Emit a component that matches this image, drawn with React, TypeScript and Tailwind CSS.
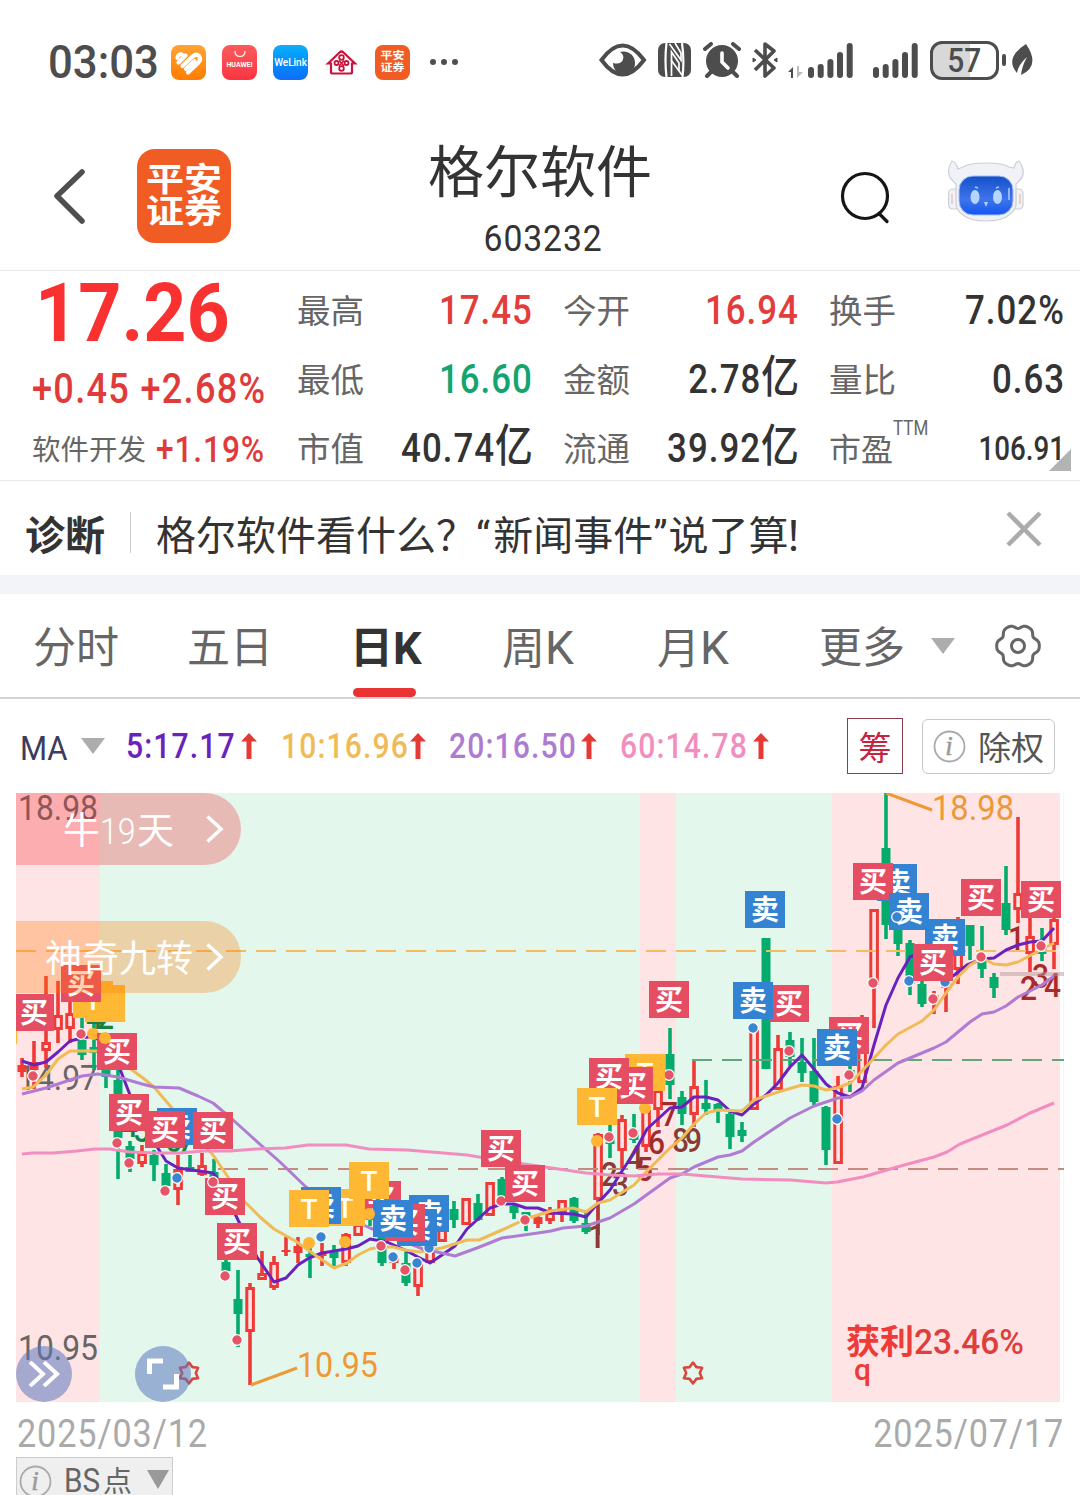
import type { ReactNode } from 'react';

const RED = '#ee3b37';
const GREEN = '#05ab6c';

// [x, wick top, wick bottom, body top, body bottom, kind]
// u = hollow red, r = solid red, d = green
type Candle = [number, number, number, number, number, 'u' | 'r' | 'd'];

const candles: Candle[] = [
  [22, 1058, 1077, 1065, 1072, 'r'],
  [34, 1041, 1089, 1062, 1070, 'r'],
  [46, 976, 1068, 1042, 1051, 'u'],
  [58, 981, 1043, 1015, 1030, 'u'],
  [70, 995, 1043, 1013, 1029, 'u'],
  [82, 1017, 1060, 1040, 1055, 'd'],
  [94, 1022, 1070, 1047, 1053, 'd'],
  [106, 1060, 1088, 1068, 1077, 'd'],
  [118, 1070, 1179, 1080, 1138, 'd'],
  [130, 1141, 1172, 1146, 1159, 'd'],
  [142, 1145, 1167, 1153, 1164, 'u'],
  [154, 1150, 1181, 1155, 1165, 'd'],
  [166, 1164, 1192, 1173, 1186, 'd'],
  [178, 1155, 1205, 1169, 1190, 'u'],
  [190, 1155, 1172, 1167, 1172, 'd'],
  [202, 1153, 1176, 1165, 1175, 'u'],
  [214, 1159, 1185, 1172, 1182, 'd'],
  [226, 1246, 1278, 1262, 1271, 'd'],
  [238, 1270, 1347, 1299, 1314, 'd'],
  [250, 1283, 1385, 1287, 1332, 'u'],
  [262, 1251, 1280, 1273, 1280, 'u'],
  [274, 1256, 1290, 1262, 1288, 'u'],
  [286, 1237, 1256, 1250, 1252, 'r'],
  [298, 1237, 1263, 1246, 1253, 'r'],
  [310, 1243, 1278, 1254, 1257, 'd'],
  [322, 1243, 1266, 1253, 1256, 'r'],
  [334, 1245, 1266, 1252, 1258, 'd'],
  [346, 1233, 1266, 1234, 1263, 'u'],
  [358, 1223, 1236, 1224, 1236, 'u'],
  [370, 1215, 1226, 1215, 1220, 'd'],
  [382, 1237, 1266, 1237, 1263, 'd'],
  [394, 1253, 1269, 1258, 1263, 'r'],
  [406, 1252, 1286, 1263, 1283, 'd'],
  [418, 1260, 1296, 1264, 1287, 'u'],
  [430, 1246, 1263, 1246, 1263, 'u'],
  [442, 1226, 1242, 1226, 1242, 'u'],
  [454, 1201, 1228, 1209, 1220, 'd'],
  [466, 1198, 1225, 1198, 1225, 'u'],
  [478, 1194, 1221, 1203, 1220, 'd'],
  [490, 1182, 1216, 1182, 1216, 'u'],
  [502, 1177, 1200, 1179, 1200, 'd'],
  [514, 1203, 1219, 1206, 1213, 'd'],
  [526, 1212, 1231, 1212, 1219, 'd'],
  [538, 1215, 1228, 1217, 1224, 'r'],
  [550, 1207, 1224, 1212, 1221, 'u'],
  [562, 1200, 1222, 1200, 1213, 'u'],
  [574, 1197, 1223, 1198, 1221, 'd'],
  [586, 1212, 1234, 1223, 1232, 'd'],
  [598, 1133, 1235, 1134, 1200, 'u'],
  [610, 1125, 1158, 1138, 1144, 'd'],
  [622, 1115, 1168, 1119, 1151, 'u'],
  [634, 1114, 1143, 1130, 1140, 'd'],
  [646, 1110, 1152, 1110, 1147, 'u'],
  [658, 1090, 1127, 1090, 1110, 'u'],
  [670, 1028, 1099, 1054, 1085, 'd'],
  [682, 1091, 1125, 1097, 1114, 'd'],
  [694, 1061, 1127, 1086, 1115, 'u'],
  [706, 1080, 1115, 1103, 1109, 'd'],
  [718, 1103, 1123, 1104, 1110, 'd'],
  [730, 1112, 1149, 1114, 1137, 'd'],
  [742, 1122, 1142, 1130, 1136, 'd'],
  [754, 1030, 1110, 1030, 1110, 'u'],
  [766, 938, 1069, 938, 1069, 'd'],
  [778, 1035, 1090, 1048, 1090, 'u'],
  [790, 1032, 1066, 1040, 1057, 'd'],
  [802, 1038, 1082, 1062, 1073, 'd'],
  [814, 1038, 1105, 1071, 1102, 'd'],
  [826, 1106, 1165, 1107, 1150, 'd'],
  [838, 1076, 1163, 1086, 1164, 'u'],
  [850, 1065, 1092, 1070, 1080, 'd'],
  [862, 1015, 1083, 1030, 1083, 'u'],
  [874, 909, 1028, 909, 985, 'u'],
  [886, 793, 939, 848, 925, 'd'],
  [898, 918, 956, 920, 944, 'd'],
  [910, 940, 995, 943, 984, 'd'],
  [922, 980, 1007, 984, 1004, 'd'],
  [934, 991, 1014, 995, 1003, 'r'],
  [946, 978, 1012, 978, 988, 'u'],
  [958, 917, 984, 925, 970, 'u'],
  [970, 925, 960, 925, 946, 'd'],
  [982, 926, 978, 961, 969, 'd'],
  [994, 973, 998, 977, 988, 'd'],
  [1006, 866, 935, 903, 930, 'd'],
  [1018, 817, 923, 893, 910, 'u'],
  [1030, 917, 972, 936, 954, 'u'],
  [1042, 928, 961, 945, 954, 'd'],
  [1054, 917, 969, 919, 945, 'u'],
];

const ma5 =
  '22,1061 34,1065 46,1062 58,1052 70,1041 82,1038 94,1036 106,1047 120,1069 130,1095 142,1120 154,1142 166,1161 178,1168 213,1173 220,1182 238,1220 257,1257 274,1282 286,1278 298,1265 309,1258 322,1253 346,1249 358,1246 370,1239 387,1242 405,1250 418,1257 430,1263 442,1255 455,1246 467,1229 478,1219 490,1208 502,1204 514,1204 526,1208 538,1208 551,1213 574,1214 586,1217 598,1203 610,1190 622,1171 634,1153 647,1129 670,1108 682,1107 694,1097 706,1097 718,1100 730,1111 742,1115 754,1104 766,1095 778,1083 790,1067 802,1055 814,1069 826,1084 838,1093 850,1097 862,1088 874,1045 886,1005 898,978 910,957 922,952 940,975 953,976 967,965 982,959 994,958 1006,950 1018,945 1030,942 1042,941 1054,928';
const ma10 =
  '22,1089 33,1087 46,1075 58,1059 70,1051 97,1051 114,1059 132,1070 143,1078 154,1087 171,1107 192,1131 213,1155 245,1202 260,1217 274,1229 297,1242 315,1255 334,1268 347,1263 358,1255 370,1249 381,1247 393,1247 405,1250 420,1252 442,1248 467,1240 479,1240 502,1230 526,1219 538,1215 551,1211 573,1208 586,1212 598,1203 610,1200 634,1185 650,1168 670,1148 682,1138 694,1124 706,1113 718,1110 742,1111 754,1100 778,1092 802,1085 814,1086 826,1090 837,1088 850,1083 862,1071 874,1058 886,1045 898,1034 922,1021 934,1010 946,993 958,977 970,965 982,958 994,964 1006,965 1018,962 1033,954 1054,943';
const ma20 =
  '22,1094 46,1088 58,1084 82,1076 98,1074 118,1077 142,1084 154,1087 179,1088 198,1096 213,1103 232,1119 253,1138 280,1162 306,1187 340,1214 370,1228 423,1249 442,1253 455,1256 477,1248 502,1238 538,1233 551,1231 563,1228 586,1226 610,1218 634,1204 670,1178 682,1174 694,1167 718,1157 730,1155 742,1151 754,1142 790,1118 814,1106 838,1098 850,1097 862,1091 874,1080 898,1063 910,1058 934,1048 946,1042 970,1022 982,1014 994,1012 1006,1006 1018,997 1042,985 1054,976';
const ma60 =
  '22,1154 33,1153 53,1153 77,1151 95,1149 110,1149 130,1152 157,1153 180,1153 203,1151 230,1151 257,1149 285,1148 308,1145 346,1145 369,1149 407,1150 467,1155 503,1161 538,1166 586,1173 610,1175 634,1176 658,1174 682,1174 742,1179 790,1180 826,1183 837,1182 863,1177 897,1167 934,1157 947,1152 960,1144 1007,1125 1030,1113 1054,1103';

const dotColors = { b: '#e65468', s: '#3a85d0', t: '#ffb533' };
const badgeColors = { b: '#e54e62', s: '#3383d2', t: '#ffb833' };
type Kind = 'b' | 's' | 't';

const dots: [number, number, Kind][] = [
  [33, 1076, 'b'], [81, 1034, 'b'], [93, 1034, 't'],
  [117, 1143, 'b'], [129, 1163, 'b'], [165, 1191, 'b'], [177, 1178, 's'],
  [225, 1276, 'b'], [237, 1340, 'b'], [309, 1243, 't'], [321, 1237, 's'],
  [345, 1242, 't'], [381, 1246, 'b'], [393, 1257, 's'], [405, 1270, 'b'],
  [417, 1263, 's'], [429, 1248, 's'], [501, 1201, 'b'], [525, 1220, 'b'],
  [597, 1141, 't'], [609, 1137, 'b'], [633, 1133, 'b'], [645, 1108, 't'],
  [669, 1075, 'b'], [753, 1028, 's'], [789, 1051, 'b'], [837, 1119, 's'],
  [849, 1075, 'b'], [873, 983, 'b'], [909, 981, 's'], [933, 999, 'b'],
  [945, 982, 's'], [981, 957, 'b'], [1041, 946, 'b'],
];

// dots that sit above the badges
const topDots: [number, number, Kind][] = [
  [105, 1038, 't'], [213, 1182, 'b'], [369, 1214, 't'], [897, 917, 's'],
];

const badges: [number, number, Kind][] = [
  [14, 994, 'b'], [85, 985, 't'], [73, 981, 't'], [61, 965, 'b'],
  [97, 1033, 'b'], [109, 1094, 'b'], [157, 1108, 's'], [145, 1111, 'b'],
  [193, 1112, 'b'], [205, 1178, 'b'], [217, 1223, 'b'],
  [361, 1181, 'b'], [325, 1189, 't'], [349, 1162, 't'], [301, 1187, 's'], [289, 1190, 't'],
  [409, 1195, 's'], [397, 1209, 's'], [385, 1204, 'b'], [373, 1200, 's'],
  [481, 1130, 'b'], [505, 1165, 'b'],
  [649, 981, 'b'], [625, 1054, 't'], [613, 1067, 'b'], [589, 1058, 'b'], [577, 1088, 't'],
  [745, 891, 's'], [769, 985, 'b'], [733, 982, 's'],
  [829, 1017, 'b'], [817, 1029, 's'],
  [877, 864, 's'], [853, 863, 'b'], [889, 893, 's'],
  [925, 919, 's'], [913, 944, 'b'], [961, 879, 'b'], [1021, 881, 'b'],
];

// nine-turn counters: [digit, x, baseline, colour]
const counts: [string, number, number, string][] = [
  ['4', 86, 1029, '#1a8040'], ['2', 97, 1029, '#1a8040'],
  ['4', 121, 1137, '#1a8040'], ['5', 133, 1142, '#1a8040'],
  ['6', 165, 1152, '#1a8040'], ['7', 178, 1152, '#1a8040'],
  ['1', 588, 1248, '#8b3a35'], ['2', 601, 1186, '#8b3a35'], ['3', 612, 1196, '#8b3a35'],
  ['4', 626, 1169, '#8b3a35'], ['5', 636, 1181, '#a02c2c'], ['6', 648, 1154, '#a02c2c'],
  ['7', 661, 1126, '#a02c2c'], ['8', 672, 1152, '#8b3a35'], ['9', 685, 1152, '#8b3a35'],
  ['1', 1008, 950, '#a82a2a'], ['2', 1020, 1000, '#a82a2a'],
  ['3', 1032, 988, '#a82a2a'], ['4', 1044, 997, '#a82a2a'],
];

function Badge({ x, y, kind }: { x: number; y: number; kind: Kind }) {
  return (
    <g>
      <rect x={x} y={y} width="40" height="37" fill={badgeColors[kind]} />
      <text
        x={x + 20}
        y={y + 28.5}
        fill="#fff"
        fontSize="28"
        fontWeight={kind === 't' ? 500 : 700}
        textAnchor="middle"
      >
        {kind === 'b' ? '买' : kind === 's' ? '卖' : 'T'}
      </text>
    </g>
  );
}

function Dot({ x, y, kind }: { x: number; y: number; kind: Kind }) {
  return (
    <circle
      cx={x}
      cy={y}
      r={kind === 't' ? 6 : 5.3}
      fill={dotColors[kind]}
      stroke="#fff"
      strokeWidth={kind === 't' ? 0 : 1.2}
    />
  );
}

function Star({ x, y }: { x: number; y: number }) {
  const pts = Array.from({ length: 12 }, (_, i) => {
    const a = (i * Math.PI) / 6 - Math.PI / 2;
    const r = i % 2 ? 6.8 : 10.5;
    return `${x + r * Math.cos(a)},${y + r * Math.sin(a)}`;
  });
  return <polygon points={pts.join(' ')} fill="none" stroke="#d8473f" strokeWidth="2.6" strokeLinejoin="round" />;
}

function AxisText({ x, y, w, fill, children }: { x: number; y: number; w: number; fill: string; children: string }) {
  return (
    <text x={x} y={y} fill={fill} fontSize="35" textLength={w} lengthAdjust="spacingAndGlyphs">
      {children}
    </text>
  );
}

function KLineChart() {
  return (
    <svg
      className="block font-[Roboto,'Noto_Sans_CJK_SC',sans-serif]"
      width="1080"
      height="609"
      viewBox="0 793 1080 609"
    >
      <clipPath id="plot">
        <rect x="16" y="793" width="1048" height="609" />
      </clipPath>
      <rect x="16" y="793" width="1044" height="609" fill="#e3f7ec" />
      <rect x="16" y="793" width="84" height="609" fill="#ffe4e5" />
      <rect x="640" y="793" width="36" height="609" fill="#ffe4e5" />
      <rect x="832" y="793" width="228" height="609" fill="#ffe4e5" />
      <path d="M1063.5 793V1402" stroke="#f6f6f8" />

      <AxisText x={18} y={820} w={80} fill="#666">18.98</AxisText>
      <AxisText x={18} y={1090} w={80} fill="#666">14.97</AxisText>
      <AxisText x={18} y={1360} w={80} fill="#666">10.95</AxisText>

      <g clipPath="url(#plot)">
        {candles.map(([x, t, b, bt, bb, k]) => (
          <g key={x}>
            <rect x={x - 1.8} y={t} width="3.6" height={b - t} fill={k === 'd' ? GREEN : RED} />
            {k === 'u' ? (
              <rect x={x - 3.2} y={bt + 1.5} width="6.6" height={Math.max(bb - bt - 3, 2)} fill="#ffe4e5" stroke={RED} strokeWidth="3" />
            ) : (
              <rect x={x - 4.5} y={bt} width="9" height={bb - bt} fill={k === 'd' ? GREEN : RED} />
            )}
          </g>
        ))}
        <path d="M598 1204V1248" stroke="#8b3a35" strokeWidth="3.4" opacity=".6" />
        {counts.map(([d, x, y, c]) => (
          <text key={`${x}-${y}`} x={x} y={y} fill={c} fontSize="34" fontWeight="500" textLength="17" lengthAdjust="spacingAndGlyphs">
            {d}
          </text>
        ))}
        <path d="M16 951H1064" stroke="#f6ba62" strokeWidth="2" strokeDasharray="20 10" />
        <path d="M692 1060H1064" stroke="#62a579" strokeWidth="2" strokeDasharray="20 10" />
        <path d="M218 1169H1064" stroke="#c58a80" strokeWidth="2" strokeDasharray="20 10" />
        <path d="M1000 974H1064" stroke="#b99a9c" strokeWidth="4" opacity=".5" />
        <g fill="none" strokeWidth="3" strokeLinejoin="round">
          <polyline points={ma5} stroke="#6b21bd" />
          <polyline points={ma10} stroke="#f0bb57" />
          <polyline points={ma20} stroke="#b07bd2" />
          <polyline points={ma60} stroke="#f28ebf" />
        </g>
        {dots.map(([x, y, k]) => (
          <Dot key={x} x={x} y={y} kind={k} />
        ))}
        <rect x="16" y="1007" width="1.2" height="37" fill="#ffb833" />
        {badges.map(([x, y, k]) => (
          <Badge key={`${x}-${y}`} x={x} y={y} kind={k} />
        ))}
        {topDots.map(([x, y, k]) => (
          <Dot key={x} x={x} y={y} kind={k} />
        ))}
      </g>

      <path d="M886 793L932 810M251 1385L297 1368" stroke="#ee9836" strokeWidth="3" fill="none" />
      <AxisText x={932} y={820} w={82} fill="#ee9836">18.98</AxisText>
      <AxisText x={297} y={1377} w={81} fill="#ee9836">10.95</AxisText>

      <text x="846" y="1354" fill={RED} fontSize="34" fontWeight="700">获利</text>
      <text x="914" y="1354" fill="#dc3f3c" fontSize="35" fontWeight="500" textLength="110" lengthAdjust="spacingAndGlyphs">
        23.46%
      </text>
      <text x="854" y="1380" fill={RED} fontSize="30" fontWeight="500">q</text>
      <Star x={189} y={1373} />
      <Star x={693} y={1373} />
    </svg>
  );
}

function PillArrow() {
  return (
    <svg width="18" height="28" viewBox="0 0 18 28" fill="none" stroke="#fff" strokeWidth="3.6">
      <path d="M1.5 1.5L15 14L1.5 26.5" />
    </svg>
  );
}

function Caret({ className = '' }: { className?: string }) {
  return (
    <svg className={className} width="24" height="16" viewBox="0 0 24 16">
      <path d="M0 0H24L12 16Z" fill="#adadad" />
    </svg>
  );
}

function Info() {
  return (
    <svg width="33" height="33" viewBox="0 0 33 33" className="shrink-0">
      <circle cx="16.5" cy="16.5" r="15" fill="none" stroke="#aaa" strokeWidth="1.8" />
      <text x="16" y="25" fontSize="27" fontStyle="italic" fill="#999" stroke="#999" strokeWidth=".5" textAnchor="middle" fontFamily="Liberation Serif, serif">
        i
      </text>
    </svg>
  );
}

function PingAn({ className }: { className: string }) {
  return (
    <div className={`flex items-center justify-center bg-[#f05c23] font-bold text-white ${className}`}>
      <div className="flex scale-y-[0.86] flex-col">
        <span>平安</span>
        <span>证券</span>
      </div>
    </div>
  );
}

function Signal() {
  return (
    <svg width="45" height="35" viewBox="0 0 45 35" stroke="#4d4d4d" strokeWidth="6" strokeLinecap="round">
      <path d="M3 27V32M12.7 24V32M22.4 19V32M32 12V32M41.7 3V32" />
    </svg>
  );
}

function StatusBar() {
  return (
    <div className="flex h-[110px] items-start pt-[42px] pl-[48px] text-[#4d4d4d]">
      <div className="h-10 w-[123px] origin-left scale-x-[0.93] text-[47px] leading-10 font-medium">03:03</div>
      <div className="flex h-10 items-center gap-4">
        <svg width="35" height="35" viewBox="0 0 35 35">
          <defs>
            <linearGradient id="heart" x2="0" y2="1">
              <stop stopColor="#ffa335" />
              <stop offset="1" stopColor="#ff7d00" />
            </linearGradient>
          </defs>
          <rect width="35" height="35" rx="8" fill="url(#heart)" />
          <g fill="none" stroke="#fff" strokeWidth="4.2" strokeLinecap="round">
            <path d="M6.5 13Q6.500 9 11 9.500" />
            <path d="M7.500 17.500L14.500 10.500" />
            <path d="M11.500 21L21 12Q25 8 28 11Q30.500 14.500 27 18L17 27.500" />
            <path d="M15 24L23.500 16" />
          </g>
        </svg>
        <div className="flex size-[35px] flex-col items-center rounded-lg bg-gradient-to-b from-[#fb5a5c] to-[#fa3341] pt-[6px] text-white">
          <svg width="12" height="7" viewBox="0 0 12 7" fill="none" stroke="#fff" strokeWidth="1.2">
            <path d="M1 0Q1 5.5 6 5.5T11 0" />
          </svg>
          <span className="mt-[2px] text-[7px] leading-[10px] font-bold">HUAWEI</span>
        </div>
        <div className="flex size-[35px] items-center justify-center rounded-lg bg-gradient-to-b from-[#10aef9] to-[#116cfb] text-[10px] font-medium text-white">
          WeLink
        </div>
        <svg width="35" height="35" viewBox="0 0 35 35" fill="none" stroke="#c8143c" strokeWidth="2.2">
          <path d="M4 18.500L15.500 7.500Q17.500 5.500 19.500 7.500L31 18.500H28V27Q28 28.500 26.500 28.500H8.500Q7 28.500 7 27V18.500Z" />
          <circle cx="17.500" cy="12.500" r="2.300" strokeWidth="1.800" />
          <circle cx="12.500" cy="18" r="2" strokeWidth="1.800" />
          <circle cx="22.500" cy="18" r="2" strokeWidth="1.800" />
          <circle cx="17.500" cy="23.500" r="2.300" strokeWidth="1.800" />
          <path d="M15 15.500L20 21M20 15.500L15 21" strokeWidth="1.600" />
        </svg>
        <PingAn className="size-[35px] rounded-lg text-[12px] leading-[14px]" />
        <div className="flex gap-[5px] pl-1">
          <i className="size-[6px] rounded-full bg-[#4d4d4d]" />
          <i className="size-[6px] rounded-full bg-[#4d4d4d]" />
          <i className="size-[6px] rounded-full bg-[#4d4d4d]" />
        </div>
      </div>
      <div className="-mt-[2px] mr-[47px] ml-auto flex h-10 items-center">
        <svg width="48" height="34" viewBox="0 0 48 34">
          <path d="M2.500 17Q23.500-12 45 17Q23.500 46 2.500 17Z" fill="none" stroke="#4d4d4d" strokeWidth="4" />
          <path d="M24 8.500A11 11.500 0 1 1 14 20Q22 22 24 16.500Q25.500 12 21 9Z" fill="#4d4d4d" />
        </svg>
        <svg className="ml-[11px]" width="33" height="34" viewBox="0 0 33 34">
          <rect width="33" height="34" rx="7" fill="#4d4d4d" />
          <path d="M8.500 0Q6.500 17 8.500 34M24 0Q26.500 17 24.500 34" fill="none" stroke="#fff" strokeWidth="2.200" />
          <path d="M13.500 33V9L21 20V28M11.500 1L23 17V10L17 0" fill="none" stroke="#fff" strokeWidth="1.700" />
          <path d="M13 17L24 32" stroke="#fff" strokeWidth="1.700" />
        </svg>
        <svg className="ml-[12px]" width="38" height="36" viewBox="0 0 38 36">
          <circle cx="19" cy="19" r="16" fill="#4d4d4d" />
          <path d="M2 7L8 2M36 7L30 2M8 30L4 34M30 30L34 34" stroke="#4d4d4d" strokeWidth="4" strokeLinecap="round" />
          <path d="M19 11V20L25 26" fill="none" stroke="#fff" strokeWidth="3.600" strokeLinecap="round" />
        </svg>
        <svg className="ml-[11px]" width="26" height="36" viewBox="0 0 26 36" fill="none" stroke="#4d4d4d" strokeWidth="3.600" strokeLinejoin="round">
          <path d="M3 8L22 26L13 34V2L22 9L3 28" />
          <path d="M1 16V20L4 18ZM25 16V20L22 18Z" fill="#4d4d4d" strokeWidth="1" />
        </svg>
        <svg className="mt-6 ml-[10px]" width="16" height="12" viewBox="0 0 16 12">
          <path d="M5 12V1L0 6H3V12Z" fill="#4d4d4d" />
          <path d="M9 0H11V6H15L9 12Z" fill="#bbb" />
        </svg>
        <div className="ml-[4px]"><Signal /></div>
        <div className="ml-[20px]"><Signal /></div>
        <div className="ml-[12px] flex h-[39px] w-[69px] items-center justify-center rounded-[12px] border-3 border-[#4d4d4d] bg-gradient-to-r from-[#d8d8d8] from-58% to-white to-58% text-[34px] leading-none font-medium">
          <span className="scale-x-[0.88]">57</span>
        </div>
        <i className="ml-[3px] h-3 w-1 rounded-sm bg-[#4d4d4d]" />
        <svg className="ml-[6px]" width="21" height="32" viewBox="0 0 21 32">
          <path d="M14 0Q29 22 9 31Q10 22 15 13Q6 21 5 29Q-8 14 14 0Z" fill="#4d4d4d" />
        </svg>
      </div>
    </div>
  );
}

function Robot() {
  return (
    <svg width="76" height="62" viewBox="0 0 76 62">
      <defs>
        <linearGradient id="visor" x2="0" y2="1">
          <stop stopColor="#1450c8" />
          <stop offset=".6" stopColor="#3f74ec" />
          <stop offset="1" stopColor="#1257f0" />
        </linearGradient>
      </defs>
      <g fill="#f1f2f7" stroke="#cdcfd6" strokeWidth="1.200">
        <rect x=".6" y="29" width="12" height="20" rx="4" />
        <rect x="63" y="29" width="12" height="20" rx="4" />
        <path d="M4 1Q-3 12 4 20L8 24V44Q8 50 15 55Q22 61 38 61T61 55Q68 50 68 44V24L72 20Q79 12 71 1Q68 1 66 8L61 7Q55 3 38 3T15 7L10 9Q8 2 4 1Z" />
      </g>
      <path d="M4 34V44M72 34V44" stroke="#ebd2c9" strokeWidth="2" />
      <rect x="11" y="16" width="54" height="39" rx="14" fill="url(#visor)" stroke="#a7c1f6" />
      <ellipse cx="27" cy="37" rx="4.500" ry="7" fill="#b5d5fc" />
      <ellipse cx="49.500" cy="37" rx="4.500" ry="7" fill="#b5d5fc" />
      <path d="M27 27L30 28M48 28L51 27M61 28V40" stroke="#a9c8fa" strokeWidth="1.600" />
      <path d="M36 42H40L38 47Z" fill="#b5d5fc" />
    </svg>
  );
}

function Header() {
  return (
    <div className="flex h-[161px] border-b border-[#e9e9e9] text-[#333]">
      <svg className="mt-[58px] ml-[53px]" width="33" height="58" viewBox="0 0 33 58" fill="none" stroke="#4f4f4f" strokeWidth="5.500" strokeLinecap="round" strokeLinejoin="round">
        <path d="M29 4L4 28L29 53" />
      </svg>
      <PingAn className="mt-[39px] ml-[51px] size-[94px] rounded-[18px] text-[38px] leading-[37px]" />
      <div className="ml-[152px] flex w-[314px] flex-col items-center pt-[27px] text-center">
        <h1 className="text-[56px] leading-[72px]">格尔软件</h1>
        <div className="mt-[10px] scale-x-[0.91] pl-[6px] text-[37px] leading-10 tracking-[1px]">603232</div>
      </div>
      <svg className="mt-[61px] ml-[143px]" width="50" height="53" viewBox="0 0 50 53" fill="none" stroke="#151515" strokeWidth="3.200" strokeLinecap="round">
        <circle cx="25" cy="25" r="22.500" />
        <path d="M39 42.500L47 50.500" />
      </svg>
      <div className="mt-[50px] ml-[58px]"><Robot /></div>
    </div>
  );
}

function Quote({ label, value, color = 'text-[#333]' }: { label: ReactNode; value: ReactNode; color?: string }) {
  return (
    <div className="flex h-[69px] items-center justify-between">
      <span className="-ml-px pt-[5px] text-[33.5px] whitespace-nowrap text-[#666]">{label}</span>
      <span className={`origin-right scale-x-[0.84] text-[41.5px] leading-[60px] font-medium tracking-[1.2px] whitespace-nowrap ${color}`}>{value}</span>
    </div>
  );
}

function Yi() {
  return <span className="text-[45px] leading-none tracking-normal">亿</span>;
}

function QuotePanel() {
  return (
    <div className="relative flex h-[210px] border-b border-[#e9e9e9]">
      <div className="flex w-[298px] shrink-0 flex-col pl-[32px]">
        <div className="mt-[3px] ml-[3px] h-20 origin-left scale-x-[0.93] text-[81px] leading-20 font-bold text-[#f93231]">17.26</div>
        <div className="mt-[10px] h-[50px] origin-left scale-x-[0.86] text-[42px] leading-[50px] font-medium tracking-[1.500px] whitespace-nowrap text-[#e03b3b]">
          +0.45 +2.68%
        </div>
        <div className="mt-[12px] flex h-[46px] items-center">
          <span className="w-[124px] pt-[4px] text-[28.500px] whitespace-nowrap text-[#666]">软件开发</span>
          <span className="origin-left scale-x-[0.88] pt-[2px] text-[36px] font-medium tracking-[1px] text-[#e03b3b]">+1.19%</span>
        </div>
      </div>
      <div className="grid w-[767px] grid-cols-[235px_235px_235px] gap-x-[31px] pt-[4px]">
        <Quote label="最高" value="17.45" color="text-[#e23c3b]" />
        <Quote label="今开" value="16.94" color="text-[#e23c3b]" />
        <Quote label="换手" value="7.02%" />
        <Quote label="最低" value="16.60" color="text-[#14a46e]" />
        <Quote label="金额" value={<>2.78<Yi /></>} />
        <Quote label="量比" value="0.63" />
        <Quote label="市值" value={<>40.74<Yi /></>} />
        <Quote label="流通" value={<>39.92<Yi /></>} />
        <Quote
          label={
            <>
              <span className="text-[32px]">市盈</span>
              <sup className="-top-[26px] inline-block origin-left scale-x-[0.85] text-[20px] leading-none">TTM</sup>
            </>
          }
          value={<span className="-ml-9 text-[33px] tracking-normal">106.91</span>}
        />
      </div>
      <svg className="absolute right-[9px] bottom-[9px]" width="22" height="22" viewBox="0 0 22 22">
        <path d="M22 0V22H0Z" fill="#b3b3b3" />
      </svg>
    </div>
  );
}

function Diagnose() {
  return (
    <div className="flex h-[94px] items-center text-[40px] text-[#333]">
      <b className="ml-[25px] pt-[18px]">诊断</b>
      <i className="mt-2 ml-[25px] h-[41px] w-px bg-[#ccc]" />
      <span className="ml-[25px] pt-[18px] whitespace-nowrap">
        格尔软件看什么？<span className="tracking-[3px]">“</span>新闻事件<span className="tracking-[1px]">”</span>说了算<span className="-ml-[5px]">！</span>
      </span>
      <svg className="mt-[2px] mr-[38px] ml-auto" width="36" height="36" viewBox="0 0 36 36" stroke="#ababab" strokeWidth="4.500">
        <path d="M2 2L34 34M34 2L2 34" />
      </svg>
    </div>
  );
}

function Gear() {
  const pts = Array.from({ length: 72 }, (_, i) => {
    const a = (i * Math.PI) / 36;
    const r = 21.3 - 3.8 * ((1 - Math.cos(6 * a)) / 2) ** 2;
    return `${23 + r * Math.cos(a)},${23 + r * Math.sin(a)}`;
  });
  return (
    <svg width="46" height="46" viewBox="0 0 46 46" fill="none" stroke="#666" strokeWidth="3" strokeLinejoin="round">
      <polygon points={pts.join(' ')} />
      <circle cx="23" cy="23" r="6.500" />
    </svg>
  );
}

function Tabs() {
  return (
    <div className="flex h-[105px] items-center border-b-2 border-[#d3d3d3] text-[43px] whitespace-nowrap text-[#666]">
      <div className="ml-[33px] w-[154px] pt-[6px]">分时</div>
      <div className="w-[163px] pt-[6px]">五日</div>
      <div className="relative flex h-full w-[152px] items-center pt-[6px] font-bold text-[#333]">
        日<span className="text-[45px]">K</span>
        <i className="absolute bottom-0 left-[3px] h-[9px] w-[63px] rounded-full bg-[#ea3433]" />
      </div>
      <div className="w-[155px] pt-[6px]">周<span className="text-[46px]">K</span></div>
      <div className="w-[162px] pt-[6px]">月<span className="text-[46px]">K</span></div>
      <div className="pt-[6px]">更多</div>
      <Caret className="ml-[26px]" />
      <div className="ml-[40px]"><Gear /></div>
    </div>
  );
}

function Ma({ children, className }: { children: string; className: string }) {
  return (
    <div className={`relative flex h-10 items-center ${className}`}>
      <span className="origin-left scale-x-[0.86] pt-[3px] text-[35px] font-medium tracking-[1.300px]">{children}</span>
      <svg className="absolute right-0" width="16" height="26" viewBox="0 0 16 26">
        <path d="M8 0L16 8.500H10.500V26H5.500V8.500H0Z" fill="#e53935" />
      </svg>
    </div>
  );
}

function Indicators() {
  return (
    <div className="flex h-[94px] items-center">
      <span className="ml-[20px] w-[61px] origin-left scale-x-[0.94] pt-[5px] text-[33px] text-[#3c3b5c]">MA</span>
      <Caret />
      <Ma className="ml-[21px] w-[131px] text-[#6a22bd]">5:17.17</Ma>
      <Ma className="ml-[24px] w-[145px] text-[#f0bb57]">10:16.96</Ma>
      <Ma className="ml-[23px] w-[148px] text-[#ae7ad2]">20:16.50</Ma>
      <Ma className="ml-[23px] w-[149px] text-[#f28ebf]">60:14.78</Ma>
      <div className="ml-[78px] flex size-14 items-center justify-center border border-[#8f3d4e] pt-[5px] text-[33px] text-[#c4243f]">筹</div>
      <div className="ml-[19px] flex h-[55px] w-[133px] items-center gap-[12px] rounded-md border border-[#c8c8c8] pl-[10px] text-[33px] whitespace-nowrap text-[#555]">
        <Info />
        <span className="pt-[5px]">除权</span>
      </div>
    </div>
  );
}

export default function App() {
  return (
    <div className="h-[1495px] w-[1080px] overflow-hidden bg-white font-[Roboto,'Noto_Sans_CJK_SC',sans-serif]">
      <StatusBar />
      <Header />
      <QuotePanel />
      <Diagnose />
      <div className="h-[19px] bg-[#f3f4f9]" />
      <Tabs />
      <Indicators />
      <div className="relative">
        <KLineChart />
        <div className="absolute top-0 left-4 flex h-[72px] w-[225px] items-center rounded-r-full bg-[rgba(241,48,52,0.3)] pr-4 text-[37px] text-white">
          <span className="ml-[47px] w-[143px] pt-[6px] whitespace-nowrap">
            牛<span className="inline-block w-[37px] origin-left scale-x-[0.87] font-light">19</span>天
          </span>
          <PillArrow />
        </div>
        <div className="absolute top-32 left-4 flex h-[72px] w-[225px] items-center rounded-r-full bg-[rgba(255,121,6,0.3)] text-[37px] text-white">
          <span className="ml-[29px] w-[161px] pt-[6px] whitespace-nowrap">神奇九转</span>
          <PillArrow />
        </div>
        <div className="absolute bottom-0 left-4 flex size-14 items-center justify-center rounded-full bg-[rgba(93,121,189,0.55)]">
          <svg width="31" height="26" viewBox="0 0 31 26" fill="none" stroke="#fff" strokeWidth="4">
            <path d="M1 1L14 13L1 25M15 1L28 13L15 25" />
          </svg>
        </div>
        <div className="absolute bottom-0 left-[135px] flex size-14 items-center justify-center rounded-full bg-[rgba(93,121,189,0.55)]">
          <svg width="32" height="32" viewBox="0 0 32 32" fill="none" stroke="#fff" strokeWidth="5">
            <path d="M2.500 16V3H16M29.500 16V29H16" />
          </svg>
        </div>
      </div>
      <div className="flex h-[55px] items-center justify-between pt-[9px] pr-[16px] pl-[17px] text-[38px] tracking-[1px] text-[#aaa]">
        <span className="origin-left scale-x-[0.9]">2025/03/12</span>
        <span className="origin-right scale-x-[0.9]">2025/07/17</span>
      </div>
      <div className="ml-4 flex h-12 w-[157px] items-center border border-[#ccc] bg-[#efefef] pl-[2px] text-[33px] whitespace-nowrap text-[#666]">
        <Info />
        <span className="ml-[12px] w-[83px]"><span className="inline-block w-[39px] origin-left scale-x-[0.9]">BS</span><span className="text-[29px]">点</span></span>
        <svg className="-mt-1" width="22" height="19" viewBox="0 0 22 19">
          <path d="M0 0H22L11 19Z" fill="#999" />
        </svg>
      </div>
    </div>
  );
}
